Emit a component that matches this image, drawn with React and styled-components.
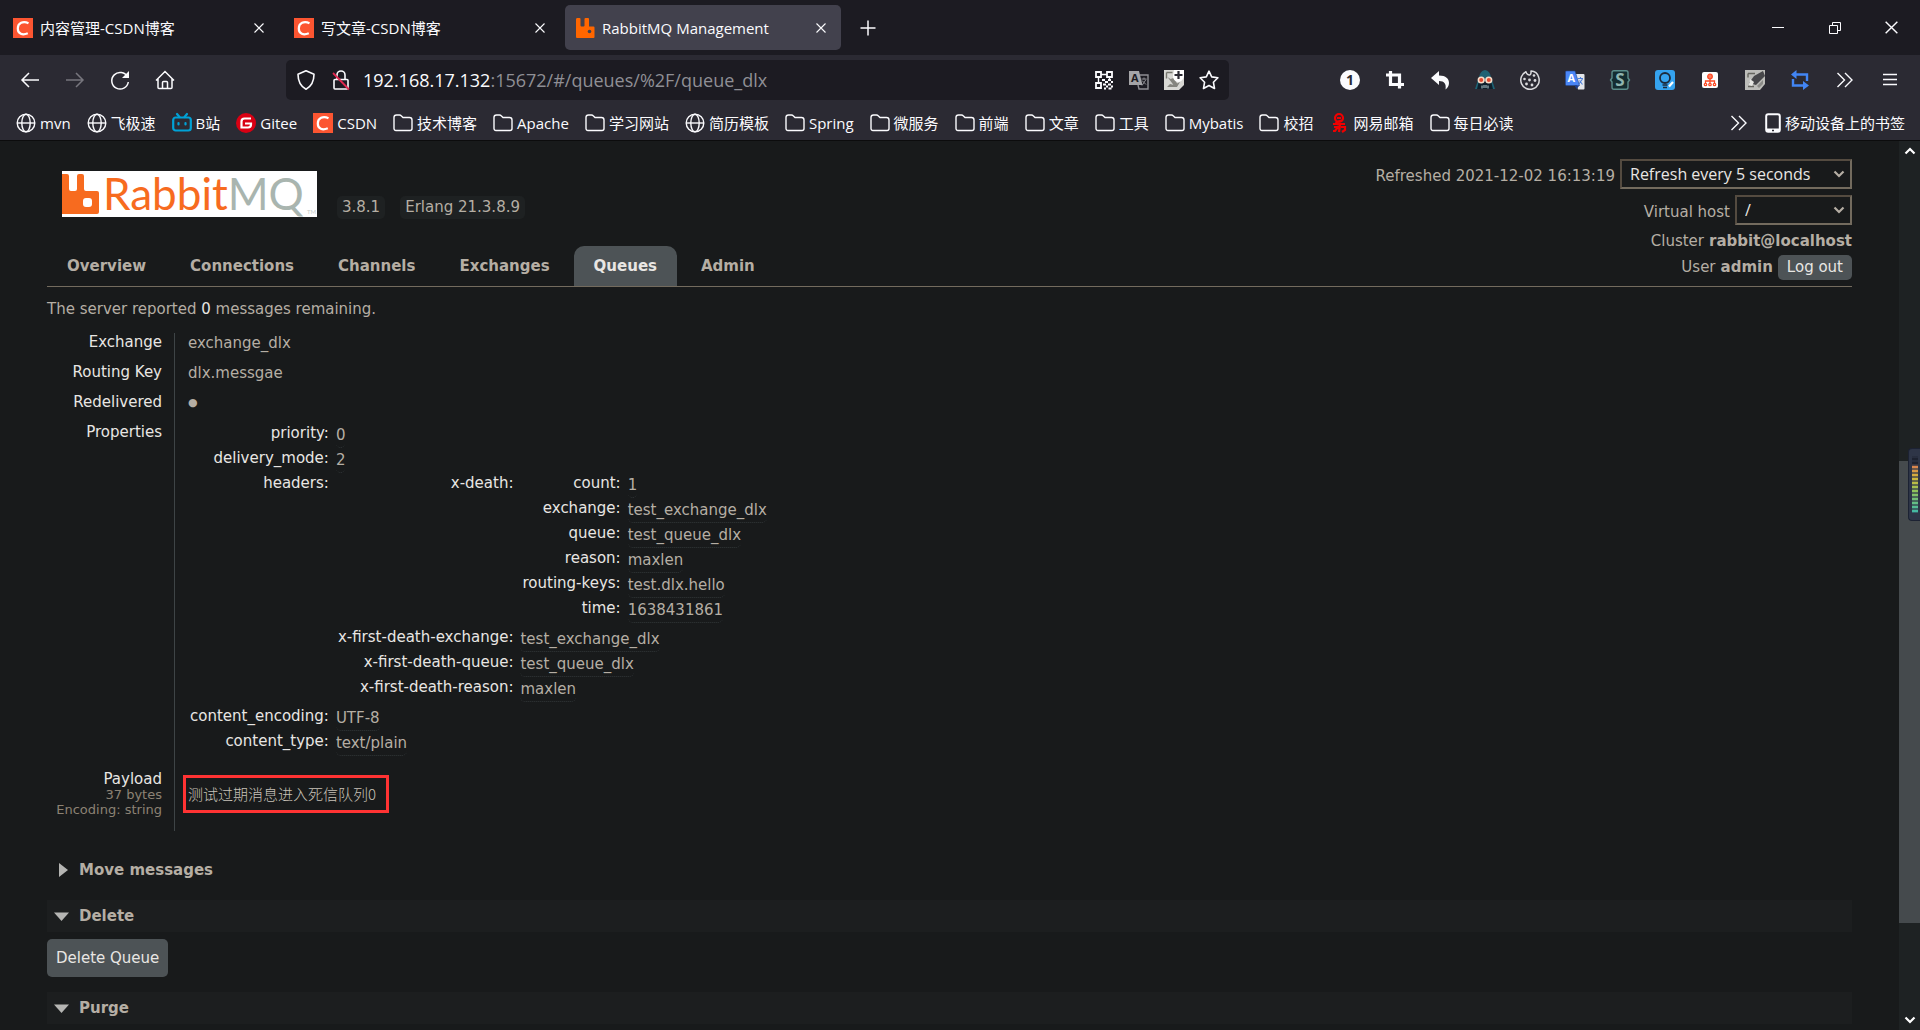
import React from "react";
import styled, { createGlobalStyle } from "styled-components";

const UI_FONT = `"Open Sans", "Noto Sans CJK SC", sans-serif`;
const PAGE_FONT = `"DejaVu Sans", "Noto Sans CJK SC", sans-serif`;

const GlobalStyle = createGlobalStyle`
  * {
    box-sizing: border-box;
  }
  body {
    margin: 0;
    background: #181a1b;
  }
  button, input, select {
    font: inherit;
    color: inherit;
  }
  button {
    border: 0;
    padding: 0;
    background: none;
    cursor: pointer;
  }
  a {
    color: inherit;
    text-decoration: none;
  }
`;

const Window = styled.div`
  display: flex;
  flex-direction: column;
  height: 100vh;
  overflow: hidden;
`;

const Svg = styled.svg`
  display: block;
  flex: none;
  width: ${(props) => props.$w || 20}px;
  height: ${(props) => props.$h || 20}px;
  overflow: visible;
  fill: none;
  stroke: currentColor;
  stroke-width: 1.4;
  text {
    stroke: none;
    font-family: ${UI_FONT};
    font-weight: 700;
  }
`;

/* browser chrome */

const TabStrip = styled.div`
  display: flex;
  align-items: center;
  gap: 5px;
  height: 55px;
  padding-left: 3px;
  background: #1c1b22;
  color: #fbfbfe;
  font-family: ${UI_FONT};
  font-size: 15px;
`;

const BrowserTab = styled.div`
  display: flex;
  align-items: center;
  gap: 7px;
  width: 276px;
  height: 45px;
  padding: 0 10px;
  border-radius: 5px;
  background: ${(props) => (props.$active ? "#42414d" : "transparent")};
`;

const TabTitle = styled.span`
  flex: 1;
  white-space: nowrap;
`;

const IconButton = styled.button`
  display: flex;
  align-items: center;
  justify-content: center;
  width: ${(props) => props.$w || 20}px;
  height: 40px;
  color: ${(props) => (props.$dim ? "#77767e" : "#fbfbfe")};
`;

const WindowControls = styled.div`
  display: flex;
  margin-left: auto;
`;

const NavBar = styled.div`
  display: flex;
  align-items: center;
  height: 50px;
  padding: 0 8px 0 7px;
  background: #2b2a33;
  color: #fbfbfe;
  font-family: ${UI_FONT};
`;

const UrlBar = styled.div`
  display: flex;
  align-items: center;
  flex: 1;
  height: 40px;
  margin-left: 99px;
  margin-right: 98px;
  padding: 0 10px;
  gap: 15px;
  border-radius: 5px;
  background: #1c1b22;
`;

const UrlField = styled.label`
  display: flex;
  flex: 1;
  margin-left: -3px;
  font-size: 18px;
`;

const UrlInput = styled.input`
  flex: 1;
  min-width: 0;
  padding: 0;
  border: 0;
  outline: 0;
  background: none;
  color: #8f8f95;
`;

const BookmarkBar = styled.nav`
  display: flex;
  align-items: center;
  gap: 16px;
  height: 36px;
  padding: 0 15px 0 16px;
  background: #2b2a33;
  border-bottom: 1px solid #0c0c0d;
  color: #fbfbfe;
  font-family: ${UI_FONT};
  font-size: 15px;
`;

const Bookmark = styled.a`
  display: flex;
  align-items: center;
  gap: 4px;
  white-space: nowrap;
`;

const BookmarkEnd = styled.div`
  display: flex;
  align-items: center;
  gap: 16px;
  margin-left: auto;
`;

/* management page */

const Viewport = styled.div`
  display: flex;
  flex: 1;
  min-height: 0;
`;

const Page = styled.div`
  flex: 1;
  padding: 18px 47px 0;
  overflow: hidden;
  color: #b5aea4;
  font-family: ${PAGE_FONT};
  font-size: 15px;
`;

const Header = styled.header`
  display: flex;
  justify-content: space-between;
  height: 128px;
  border-bottom: 1px solid #736b5e;
`;

const Brand = styled.div`
  display: flex;
  flex-direction: column;
  justify-content: space-between;
  padding-top: 12px;
`;

const BrandRow = styled.div`
  display: flex;
  align-items: flex-end;
  gap: 15px;
  padding-left: 15px;
`;

const Logo = styled.a`
  display: flex;
  align-items: center;
  width: 255px;
  height: 46px;
  margin: 0 5px 2px 0;
  background: #fff;
`;

const Version = styled.span`
  padding: 0 5px;
  border-radius: 5px;
  background: #1e2122;
  line-height: 23px;
`;

const Menu = styled.nav`
  display: flex;
  gap: 4px;
`;

const MenuLink = styled.a`
  padding: 0 20px;
  border-radius: 10px 10px 0 0;
  background: ${(props) => (props.$active ? "#4d5356" : "transparent")};
  color: ${(props) => (props.$active ? "#e8e6e3" : "#b5aea4")};
  font-weight: bold;
  line-height: 40px;
`;

const Status = styled.div`
  display: flex;
  flex-direction: column;
  align-items: flex-end;
`;

const StatusRow = styled.div`
  display: flex;
  align-items: center;
  gap: 5px;
  height: ${(props) => props.$h}px;
  label {
    padding-top: 3px;
  }
`;

const SelectBox = styled.span`
  display: flex;
  position: relative;
  svg {
    position: absolute;
    top: 11px;
    right: 7px;
    pointer-events: none;
  }
`;

const Select = styled.select`
  width: ${(props) => props.$w}px;
  height: 30px;
  padding: 0 8px;
  appearance: none;
  border: 2px solid;
  border-color: #544b40 #736b5e #736b5e #544b40;
  border-radius: 0;
  background: #181a1b;
  color: #e8e6e3;
  font-family: ${UI_FONT};
  font-size: 16px;
`;

const SmallButton = styled.button`
  padding: 0 9px;
  border-radius: 5px;
  background: #4d5356;
  color: #e8e6e3;
  line-height: 25px;
`;

const Remaining = styled.p`
  margin: 0;
  padding: 12px 0 14px;
  line-height: 20px;
  b {
    color: #e8e6e3;
    font-weight: normal;
  }
`;

const Facts = styled.table`
  border-spacing: 0;
`;

const FactLabel = styled.th`
  width: 127px;
  padding: 2px 12px 13px 0;
  color: #e8e6e3;
  font-weight: normal;
  line-height: 15px;
  text-align: right;
  vertical-align: top;
  white-space: nowrap;
`;

const FactValue = styled.td`
  padding: ${(props) => props.$pad || "0 0 10px 13px"};
  border-left: 1px solid #3e4446;
  line-height: 20px;
  vertical-align: top;
`;

const Dot = styled.span`
  display: block;
  font-size: 11px;
`;

const SubLabel = styled.div`
  color: #8c8274;
  font-size: 13px;
  line-height: 15px;
`;

const Props = styled.table`
  border-spacing: 0;
`;

const PropLabel = styled.th`
  padding: 0 7px 5px 2px;
  color: #e8e6e3;
  font-weight: normal;
  line-height: 20px;
  text-align: right;
  vertical-align: top;
  white-space: nowrap;
`;

const PropValue = styled.td`
  padding: 0 0 ${(props) => (props.$nested ? 4 : 0)}px;
  height: 25px;
  vertical-align: top;
`;

const Abbr = styled.span`
  display: block;
  width: fit-content;
  border-bottom: 1px dotted #33383a;
  border-radius: 5px;
  line-height: 24px;
  white-space: nowrap;
`;

const Payload = styled.pre`
  width: fit-content;
  margin: 0 0 0 -5px;
  padding: 0 10px 0 2px;
  border: 3px solid #ff3333;
  color: #c8c2b8;
  font-family: "Noto Sans CJK SC", sans-serif;
  font-weight: 300;
  line-height: 32px;
`;

const Section = styled.section`
  margin-top: ${(props) => props.$gap}px;
`;

const SectionHead = styled.h2`
  margin: 0;
  background: ${(props) => (props.$open ? "#1c1e1f" : "transparent")};
  font-size: 15px;
`;

const SectionToggle = styled.button`
  display: flex;
  align-items: center;
  gap: 10px;
  width: 100%;
  padding: 0 7px;
  font-weight: bold;
  line-height: 32px;
`;

const BigButton = styled.button`
  margin-top: 7px;
  padding: 0 9px;
  border-radius: 5px;
  background: #4d5356;
  color: #e8e6e3;
  line-height: 38px;
`;

const Scrollbar = styled.div`
  display: flex;
  flex-direction: column;
  justify-content: space-between;
  align-items: center;
  position: relative;
  width: 21px;
  padding: 6px 0;
  background: #1e2223;
  color: #fff;
`;

const Thumb = styled.div`
  position: absolute;
  top: 36%;
  bottom: 12%;
  left: 0;
  width: 100%;
  background: #454a4d;
`;

const Meter = styled.div`
  position: absolute;
  top: 307px;
  right: 0;
  width: 12px;
  height: 73px;
  padding: 7px 2px 7px 3px;
  border: 1px solid #1c2233;
  border-right: 0;
  border-radius: 4px 0 0 4px;
  background: #2e3547;
`;

const MeterBars = styled.div`
  height: 100%;
  background: repeating-linear-gradient(#2e3547a0 0 2px, transparent 2px 4px),
    linear-gradient(#1d2230 14%, #d9834f 18%, #d3b73a 38%, #8fc45c 62%, #3fb8a8);
`;

/* icons */

const CsdnIcon = () => (
  <Svg viewBox="0 0 20 20">
    <rect width="20" height="20" fill="#fc5531" stroke="none" />
    <path d="M15.500 5.200C10 2.600 4.800 5 4.800 10.500c0 5.500 4.700 7 10 4.800" stroke="#fff" strokeWidth="2.200" />
  </Svg>
);

const RabbitIcon = () => (
  <Svg viewBox="0 0 20 20">
    <path
      d="M1 1.500Q1 0 2 0h2.500q1 0 1 1v6.500q0 1 1 1h2q1 0 1-1V1q0-1 1-1H13q1 0 1 1v7.500h4.500q1 0 1 1V19q0 1-1 1H2q-1 0-1-1z"
      fill="#ff6600"
      stroke="none"
    />
    <circle cx="14.500" cy="13.500" r="1.800" fill="#42414d" stroke="none" />
  </Svg>
);

const CloseIcon = ({ size = 10 }) => (
  <Svg viewBox="0 0 10 10" $w={size} $h={size}>
    <path d="M.5.5l9 9M9.500.5l-9 9" strokeWidth="1.100" />
  </Svg>
);

const GlobeIcon = () => (
  <Svg viewBox="0 0 20 20">
    <circle cx="10" cy="10" r="8.800" />
    <ellipse cx="10" cy="10" rx="4.200" ry="8.800" />
    <path d="M1 10h18" />
  </Svg>
);

const FolderIcon = () => (
  <Svg viewBox="0 0 20 20">
    <path d="M1 4.500a2.500 2.500 0 0 1 2.500-2.500h3q1 0 1.700.8L10 4.500h6.500A2.500 2.500 0 0 1 19 7v8.500a2 2 0 0 1-2 2H3a2 2 0 0 1-2-2z" />
  </Svg>
);

const BiliIcon = () => (
  <Svg viewBox="0 0 20 20">
    <g stroke="#00a1d6" strokeWidth="2.200" strokeLinecap="round">
      <rect x="1.200" y="4.500" width="17.600" height="13" rx="2.500" />
      <path d="M5 1l2.500 3M15 1l-2.500 3M6.500 10v1.500M13.500 10v1.500" />
    </g>
  </Svg>
);

const GiteeIcon = () => (
  <Svg viewBox="0 0 20 20">
    <circle cx="10" cy="10" r="10" fill="#d90013" stroke="none" />
    <path d="M15 5.500H8.500a3 3 0 0 0-3 3v6h6.500a3 3 0 0 0 3-3v-1H9" stroke="#fff" strokeWidth="2.200" />
  </Svg>
);

const NeteaseIcon = () => (
  <Svg viewBox="0 0 20 20">
    <g stroke="#f00000" strokeWidth="2.200">
      <circle cx="10" cy="5" r="4" />
      <path d="M8 5h4M13 7.500c-6 1-8 3-3 4M4 11h12M5 14h4l-3 4H4M11 12l-1 7M12 14h4v3l-3 2" />
    </g>
  </Svg>
);

const PhoneIcon = () => (
  <Svg viewBox="0 0 16 20" $w={16}>
    <rect x="1.200" y="1.200" width="13.600" height="17.600" rx="2" strokeWidth="2" />
    <path d="M1 17h14" strokeWidth="3" />
    <path d="M7 17.500h2" stroke="#2b2a33" />
  </Svg>
);

const ChevronsIcon = () => (
  <Svg viewBox="0 0 20 20">
    <path d="M2.500 3l7 7-7 7M10 3l7 7-7 7" />
  </Svg>
);

const ArrowIcon = ({ flip }) => (
  <Svg viewBox="0 0 20 20">
    <path d={flip ? "M1 10h17M11 3l7 7-7 7" : "M19 10H2M9 3l-7 7 7 7"} strokeWidth="1.500" />
  </Svg>
);

const ReloadIcon = () => (
  <Svg viewBox="0 0 20 20">
    <path d="M17.500 7A8.300 8.300 0 1 0 18.300 12" strokeWidth="1.500" />
    <path d="M19 1v7h-7z" fill="currentColor" stroke="none" />
  </Svg>
);

const HomeIcon = () => (
  <Svg viewBox="0 0 20 20">
    <path d="M1 10.500L10 1.500l9 9M3 9v8.500q0 1 1 1h12q1 0 1-1V9M7.500 18.500v-6q0-1 1-1h3q1 0 1 1v6" strokeWidth="1.500" />
  </Svg>
);

const ShieldIcon = () => (
  <Svg viewBox="0 0 20 20">
    <path d="M10 .8l8 3.500c0 7-2.500 12-8 15-5.500-3-8-8-8-15z" strokeWidth="1.600" strokeLinejoin="round" />
  </Svg>
);

const LockIcon = () => (
  <Svg viewBox="0 0 20 20">
    <path d="M6 10V5a4 4 0 0 1 8 0v5M4 9.500h12q1 0 1 1V18q0 1-1 1H4q-1 0-1-1v-7.500q0-1 1-1z" strokeWidth="1.600" />
    <path d="M2 3l16 16.500" stroke="#e22850" strokeWidth="1.800" />
  </Svg>
);

const QrIcon = () => (
  <Svg viewBox="0 0 20 20">
    <path d="M2 2h5v5H2zM13 2h5v5h-5zM2 13h5v5H2z" strokeWidth="1.800" />
    <path d="M7 4.500h6M4.500 8v4M15.500 8v2" strokeWidth="1.400" />
    <path d="M8 10h3M14 10h3M11 12h3M17 12h2M9 14.500h3M14 14.500h3M12 16.500h2M17 16.500h2M10 18.500h2M14.500 18.500h3" strokeWidth="2" />
  </Svg>
);

const PageTranslateIcon = () => (
  <Svg viewBox="0 0 20 20">
    <path d="M0 1h10l3.500 14H0z" fill="#a5a5a8" stroke="none" />
    <path d="M11 5h8v14h-9l-1-4" stroke="#8f8f94" />
    <path d="M12.500 9h5M15 7.500v2M17 9.500l-4 6M13 10.500l4 4" stroke="#8f8f94" strokeWidth="1" />
    <text x="2" y="12" fontSize="11" fill="#1c1b22">A</text>
  </Svg>
);

const AddImageIcon = () => (
  <Svg viewBox="0 0 20 20">
    <path d="M0 0h20v15l-5 5H0z" fill="#d8d8d4" stroke="none" />
    <path d="M2.500 2.500h6M2.500 2.500v6" stroke="#77776f" />
    <path d="M3 17l3-3 4 1 6-3-3 5zM3.500 7l3 2 3-1 4 6-4 1z" fill="#85857f" stroke="none" />
    <path d="M10 0h10v7q-2 5-6 5-5-1-5-6z" fill="#fff" stroke="none" />
    <path d="M14.500 1v8M10.500 5h8" stroke="#2b2a33" strokeWidth="2.200" />
  </Svg>
);

const StarIcon = () => (
  <Svg viewBox="0 0 20 20">
    <path
      d="M10 1.200l2.700 5.700 6.200.9-4.500 4.400 1.100 6.300L10 15.500l-5.500 3 1.100-6.300L1.100 7.800l6.200-.9z"
      strokeWidth="1.600"
      strokeLinejoin="round"
    />
  </Svg>
);

const OneIcon = () => (
  <Svg viewBox="0 0 20 20">
    <circle cx="10" cy="10" r="10" fill="#fbfbfe" stroke="none" />
    <text x="10" y="15" fontSize="14" fill="#2b2a33" textAnchor="middle">1</text>
  </Svg>
);

const CropIcon = () => (
  <Svg viewBox="0 0 20 20">
    <path d="M1 5h13.500v13.500M5.500 1v13.500H19" strokeWidth="3.200" />
  </Svg>
);

const UndoIcon = () => (
  <Svg viewBox="0 0 20 20">
    <path d="M1 8l8-7v4.500c7 .2 10 3 10 7.500 0 3-1.500 5-3.500 6.500C16.500 14 14.500 11 9 11v4z" fill="currentColor" stroke="none" />
  </Svg>
);

const VaderIcon = () => (
  <Svg viewBox="0 0 20 20">
    <path d="M0 19L4 7q1-6 6-7 5 1 6 7l4 12z" fill="#1f6273" stroke="none" />
    <path d="M2 19l2-8h12l2 8z" fill="#0e1f2b" stroke="none" />
    <circle cx="6.200" cy="10" r="2.800" fill="#e0492f" stroke="#f6dcc8" strokeWidth="1.600" />
    <circle cx="13.800" cy="10" r="2.800" fill="#e0492f" stroke="#f6dcc8" strokeWidth="1.600" />
    <path d="M7 15.500v3M9 15v3M11 15v3M13 15.500v3" stroke="#b9d3d8" strokeWidth="1" />
  </Svg>
);

const CookieIcon = () => (
  <Svg viewBox="0 0 20 20" color="#dadadd">
    <path
      d="M6 1.800A9.200 9.200 0 1 0 18.800 7.500C18 3.500 14.500.8 11 .9c0 2 .5 3-1 4C8.500 5.500 6.500 4 6 1.800z"
      strokeWidth="1.500"
      strokeLinejoin="round"
    />
    <g fill="currentColor" stroke="none">
      <circle cx="4.500" cy="9" r="1.300" />
      <circle cx="6.500" cy="14" r="1.400" />
      <circle cx="9.500" cy="10" r="1.400" />
      <circle cx="12" cy="15" r="1.400" />
      <circle cx="15" cy="10.500" r="1.400" />
      <circle cx="14" cy="5.500" r="1.300" />
    </g>
  </Svg>
);

const TranslateIcon = () => (
  <Svg viewBox="0 0 20 20">
    <path d="M9 4h9.500q1 0 1 1v13.500q0 1-1 1H13z" fill="#e4e6ea" stroke="none" />
    <path d="M13 8.500h5M15.500 7v2M17.500 9l-4 5.500M14.500 10.500l3 4" stroke="#4f80d9" strokeWidth="1.100" />
    <path d="M1.500 1H10l4.500 14.500h-13q-1 0-1-1V2q0-1 1-1z" fill="#4a86f7" stroke="#23468f" strokeWidth=".6" />
    <path d="M9.500 15.500h5L11.500 19z" fill="#1c3f8f" stroke="none" />
    <text x="2.500" y="12" fontSize="11" fill="#fff">A</text>
  </Svg>
);

const StylusIcon = () => (
  <Svg viewBox="0 0 20 20">
    <path
      d="M4 .8h12q2 0 2 2V8l1.500 2-1.500 2v5.200q0 2-2 2H4q-2 0-2-2V12L.5 10 2 8V2.800q0-2 2-2z"
      fill="#142d31"
      stroke="#5b8e8b"
    />
    <text x="10" y="16" fontSize="17" fill="#8fb5b0" textAnchor="middle">S</text>
  </Svg>
);

const BulbIcon = () => (
  <Svg viewBox="0 0 20 20">
    <rect width="20" height="20" rx="3" fill="#35a3ef" stroke="none" />
    <circle cx="10" cy="8" r="5" stroke="#1d2a3b" strokeWidth="1.800" />
    <path d="M7.500 15h5M8 17.500h4" stroke="#1d2a3b" strokeWidth="1.400" />
    <path d="M14 16.500l4-4.500" stroke="#fff" strokeWidth="2.200" />
  </Svg>
);

const SitemapIcon = () => (
  <Svg viewBox="0 0 20 20">
    <rect x="2" y="2" width="16" height="16" rx="2" fill="#fff" stroke="none" />
    <g stroke="#ff4b26" strokeWidth="1.300">
      <circle cx="10" cy="6.500" r="2.300" fill="#ff7c5e" />
      <path d="M10 9v4M5.500 13v-2h9v2" />
      <circle cx="5.500" cy="14.500" r="1.200" />
      <circle cx="10" cy="14.500" r="1.200" />
      <circle cx="14.500" cy="14.500" r="1.200" />
    </g>
  </Svg>
);

const NoteIcon = () => (
  <Svg viewBox="0 0 20 20">
    <path d="M0 0h20v14l-5 6H0z" fill="#bdbdb9" stroke="none" />
    <path d="M3 3.500h7M3 3.500v4M3 16.500h6" stroke="#66665f" />
    <path d="M4 13l5-7 9-5 2 5-9 9z" fill="#47474a" stroke="none" />
    <path d="M5 9l4 3-2 4-3-1z" fill="#e6e6e2" stroke="none" />
    <path d="M12 16l6-6v4l-4 4z" fill="#8b8b88" stroke="none" />
  </Svg>
);

const LoopIcon = () => (
  <Svg viewBox="0 0 20 20" color="#4285f4">
    <path d="M5 4.500h12V11M15 15.500H3V9" strokeWidth="2.400" />
    <path d="M6.500 0v9L1 4.500zM13 11v9l6-4.500z" fill="currentColor" stroke="none" />
  </Svg>
);

const MenuIcon = () => (
  <Svg viewBox="0 0 20 20">
    <path d="M3 4.500h14M3 9.500h14M3 14.500h14" strokeWidth="1.500" />
  </Svg>
);

const ChevronDown = ({ up }) => (
  <Svg viewBox="0 0 12 8" $w={12} $h={8}>
    <path d={up ? "M1.500 6.500L6 2l4.500 4.500" : "M1.500 1.500L6 6l4.500-4.500"} strokeWidth="2.200" />
  </Svg>
);

const TriangleIcon = ({ open }) => (
  <Svg viewBox="0 0 15 15" $w={15} $h={15}>
    <path d={open ? "M0 3.500h15L7.500 12z" : "M5 0v14l9-7z"} fill="#b5b5b3" stroke="none" />
  </Svg>
);

const LogoText = styled.text`
  && {
    font-family: Lato, sans-serif;
    font-weight: 400;
  }
`;

const RabbitLogo = () => (
  <Svg viewBox="0 0 255 46" $w={255} $h={46}>
    <path
      d="M0 3h5q2 0 2 2v13q0 2 2 2h4q2 0 2-2V5q0-2 2-2h3q2 0 2 2v13q0 2 2 2h11q2 0 2 2v19q0 2-2 2H0z"
      fill="#f76b1f"
      stroke="none"
    />
    <rect x="21" y="27" width="9" height="9" rx="3" fill="#fff" stroke="none" />
    <LogoText x="41" y="39" fontSize="44">
      <tspan fill="#f76b1f">Rabbit</tspan>
      <tspan fill="#a9b5af">MQ</tspan>
    </LogoText>
    <LogoText x="245" y="43" fontSize="6" fill="#c5cbc8">
      TM
    </LogoText>
  </Svg>
);

const browserTabs = [
  { title: "内容管理-CSDN博客", icon: CsdnIcon },
  { title: "写文章-CSDN博客", icon: CsdnIcon },
  { title: "RabbitMQ Management", icon: RabbitIcon, active: true },
];

const extensions = [
  ["One", OneIcon],
  ["Crop", CropIcon],
  ["Undo", UndoIcon],
  ["Vader", VaderIcon],
  ["Cookies", CookieIcon],
  ["Translate", TranslateIcon],
  ["Stylus", StylusIcon],
  ["Ideas", BulbIcon],
  ["Sitemap", SitemapIcon],
  ["Notes", NoteIcon],
  ["Loop", LoopIcon],
  ["More tools", ChevronsIcon],
  ["Menu", MenuIcon],
];

const bookmarks = [
  ["mvn", GlobeIcon],
  ["飞极速", GlobeIcon],
  ["B站", BiliIcon],
  ["Gitee", GiteeIcon],
  ["CSDN", CsdnIcon],
  ["技术博客", FolderIcon],
  ["Apache", FolderIcon],
  ["学习网站", FolderIcon],
  ["简历模板", GlobeIcon],
  ["Spring", FolderIcon],
  ["微服务", FolderIcon],
  ["前端", FolderIcon],
  ["文章", FolderIcon],
  ["工具", FolderIcon],
  ["Mybatis", FolderIcon],
  ["校招", FolderIcon],
  ["网易邮箱", NeteaseIcon],
  ["每日必读", FolderIcon],
];

const menu = ["Overview", "Connections", "Channels", "Exchanges", "Queues", "Admin"];

const properties = {
  priority: "0",
  delivery_mode: "2",
  headers: {
    "x-death": {
      count: "1",
      exchange: "test_exchange_dlx",
      queue: "test_queue_dlx",
      reason: "maxlen",
      "routing-keys": "test.dlx.hello",
      time: "1638431861",
    },
    "x-first-death-exchange": "test_exchange_dlx",
    "x-first-death-queue": "test_queue_dlx",
    "x-first-death-reason": "maxlen",
  },
  content_encoding: "UTF-8",
  content_type: "text/plain",
};

// objects become a table inside the cell
const PropertyTable = ({ data }) => (
  <Props>
    <tbody>
      {Object.entries(data).map(([key, value]) => {
        const nested = typeof value === "object";
        return (
          <tr key={key}>
            <PropLabel scope="row">{key}:</PropLabel>
            <PropValue $nested={nested}>
              {nested ? <PropertyTable data={value} /> : <Abbr>{value}</Abbr>}
            </PropValue>
          </tr>
        );
      })}
    </tbody>
  </Props>
);

const Collapsible = ({ title, open, gap, children }) => (
  <Section $gap={gap}>
    <SectionHead $open={open}>
      <SectionToggle aria-expanded={!!open}>
        <TriangleIcon open={open} />
        {title}
      </SectionToggle>
    </SectionHead>
    {children}
  </Section>
);

const BrowserChrome = () => (
  <>
    <TabStrip>
      {browserTabs.map(({ title, icon: Icon, active }) => (
        <BrowserTab key={title} $active={active}>
          <Icon />
          <TabTitle>{title}</TabTitle>
          <IconButton aria-label="Close tab">
            <CloseIcon />
          </IconButton>
        </BrowserTab>
      ))}
      <IconButton $w={44} aria-label="New tab">
        <Svg viewBox="0 0 16 16" $w={16} $h={16}>
          <path d="M8 .5v15M.5 8h15" strokeWidth="1.500" />
        </Svg>
      </IconButton>
      <WindowControls>
        <IconButton $w={57} aria-label="Minimize">
          <Svg viewBox="0 0 12 12" $w={12} $h={12}>
            <path d="M0 5.500h12" strokeWidth="1" />
          </Svg>
        </IconButton>
        <IconButton $w={57} aria-label="Restore">
          <Svg viewBox="0 0 12 12" $w={12} $h={12}>
            <path d="M.5 3.500h8v8h-8zM3.500 3.500v-3h8v8h-3" strokeWidth="1" />
          </Svg>
        </IconButton>
        <IconButton $w={57} aria-label="Close">
          <CloseIcon size={13} />
        </IconButton>
      </WindowControls>
    </TabStrip>
    <NavBar>
      <IconButton $w={45} aria-label="Back">
        <ArrowIcon />
      </IconButton>
      <IconButton $w={45} $dim aria-label="Forward">
        <ArrowIcon flip />
      </IconButton>
      <IconButton $w={45} aria-label="Reload">
        <ReloadIcon />
      </IconButton>
      <IconButton $w={45} aria-label="Home">
        <HomeIcon />
      </IconButton>
      <UrlBar>
        <ShieldIcon />
        <LockIcon />
        <UrlField>
          192.168.17.132
          <UrlInput aria-label="Address" defaultValue=":15672/#/queues/%2F/queue_dlx" />
        </UrlField>
        <QrIcon />
        <PageTranslateIcon />
        <AddImageIcon />
        <StarIcon />
      </UrlBar>
      {extensions.map(([name, Icon]) => (
        <IconButton key={name} $w={45} aria-label={name}>
          <Icon />
        </IconButton>
      ))}
    </NavBar>
    <BookmarkBar>
      {bookmarks.map(([name, Icon]) => (
        <Bookmark key={name} href="#">
          <Icon />
          {name}
        </Bookmark>
      ))}
      <BookmarkEnd>
        <ChevronsIcon />
        <Bookmark href="#">
          <PhoneIcon />
          移动设备上的书签
        </Bookmark>
      </BookmarkEnd>
    </BookmarkBar>
  </>
);

const App = () => (
  <Window>
    <GlobalStyle />
    <BrowserChrome />
    <Viewport>
      <Page>
        <Header>
          <Brand>
            <BrandRow>
              <Logo href="#" aria-label="RabbitMQ">
                <RabbitLogo />
              </Logo>
              <Version>3.8.1</Version>
              <Version>Erlang 21.3.8.9</Version>
            </BrandRow>
            <Menu>
              {menu.map((name) => (
                <MenuLink key={name} href="#" $active={name === "Queues"}>
                  {name}
                </MenuLink>
              ))}
            </Menu>
          </Brand>
          <Status>
            <StatusRow $h={30}>
              <label htmlFor="refresh">Refreshed 2021-12-02 16:13:19</label>
              <SelectBox>
                <Select id="refresh" $w={232}>
                  <option>Refresh every 5 seconds</option>
                </Select>
                <ChevronDown />
              </SelectBox>
            </StatusRow>
            <StatusRow $h={42}>
              <label htmlFor="vhost">Virtual host</label>
              <SelectBox>
                <Select id="vhost" $w={117}>
                  <option>/</option>
                </Select>
                <ChevronDown />
              </SelectBox>
            </StatusRow>
            <StatusRow $h={20}>
              Cluster <b>rabbit@localhost</b>
            </StatusRow>
            <StatusRow $h={32}>
              User <b>admin</b>
              <SmallButton>Log out</SmallButton>
            </StatusRow>
          </Status>
        </Header>
        <Remaining>
          The server reported <b>0</b> messages remaining.
        </Remaining>
        <Facts>
          <tbody>
            <tr>
              <FactLabel scope="row">Exchange</FactLabel>
              <FactValue>exchange_dlx</FactValue>
            </tr>
            <tr>
              <FactLabel scope="row">Routing Key</FactLabel>
              <FactValue>dlx.messgae</FactValue>
            </tr>
            <tr>
              <FactLabel scope="row">Redelivered</FactLabel>
              <FactValue>
                <Dot>●</Dot>
              </FactValue>
            </tr>
            <tr>
              <FactLabel scope="row">Properties</FactLabel>
              <FactValue $pad="0 0 14px 13px">
                <PropertyTable data={properties} />
              </FactValue>
            </tr>
            <tr>
              <FactLabel scope="row">
                Payload
                <SubLabel>37 bytes</SubLabel>
                <SubLabel>Encoding: string</SubLabel>
              </FactLabel>
              <FactValue $pad="5px 0 18px 13px">
                <Payload>测试过期消息进入死信队列0</Payload>
              </FactValue>
            </tr>
          </tbody>
        </Facts>
        <Collapsible title="Move messages" gap={23} />
        <Collapsible title="Delete" open gap={14}>
          <BigButton>Delete Queue</BigButton>
        </Collapsible>
        <Collapsible title="Purge" open gap={15} />
      </Page>
      <Scrollbar>
        <ChevronDown up />
        <Thumb />
        <ChevronDown />
        <Meter>
          <MeterBars />
        </Meter>
      </Scrollbar>
    </Viewport>
  </Window>
);

export default App;
